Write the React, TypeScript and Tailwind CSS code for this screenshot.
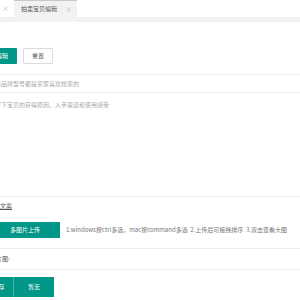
export default function App() {
  return (
    <div className="w-[300px] h-[300px] overflow-hidden bg-white text-[6px] leading-none font-['Noto_Sans_CJK_SC','Noto_Sans',sans-serif] text-[#666]">
      {/* tabs */}
      <div className="flex h-[17px] items-stretch">
        <div className="w-[14px] flex items-center justify-end pr-[5px] text-[#bbb] text-[7px]">×</div>
        <div className="w-[63px] bg-[#f2f2f2] border-t border-[#c8c8c8] flex items-center pl-[7px] text-[#555]">
          拍卖宝贝编辑
          <span className="ml-auto mr-[5px] text-[#bbb] text-[7px]">×</span>
        </div>
      </div>
      <div className="h-[5px] bg-[#f2f2f2]" />

      {/* buttons */}
      <div className="pt-[26px] flex gap-[6px] h-[42px]">
        <div className="-ml-[13px] w-[30px] h-[16px] bg-[#009688] text-white flex items-center justify-center rounded-[1px]">编辑</div>
        <div className="w-[30px] h-[16px] border border-[#dcdcdc] text-[#555] flex items-center justify-center rounded-[1px]">重置</div>
      </div>

      <div className="mt-[10px] border-t border-[#eee]" />
      <div className="h-[18px] flex items-center -ml-[11px] text-[#aaa] border-b border-[#eee]">时尚品牌型号都是买家喜欢搜索的</div>

      <div className="h-[104px] border-b border-[#eee] pt-[9px] -ml-[5px] text-[#aaa]">写下宝贝的获得原因、入手渠道和使用感受</div>

      <div className="h-[17px] flex items-center">
        <span className="-ml-[6px] text-[#555] underline">方文案</span>
      </div>

      <div className="mt-[8px] h-[16px] flex items-center">
        <div className="-ml-[10px] w-[70px] h-[16px] bg-[#009688] text-white flex items-center justify-center">多图片上传</div>
        <div className="ml-[6px] text-[#777] whitespace-nowrap">1.windows按ctrl多选，mac按command多选&nbsp;&nbsp;2.上传后可拖拽排序&nbsp;&nbsp;3.双击查看大图</div>
      </div>

      <div className="mt-[10px] border-t border-[#eee]" />
      <div className="h-[20px] flex items-center">
        <span className="-ml-[4px] text-[#555]">片图:</span>
      </div>
      <div className="border-t border-[#eee]" />

      <div className="mt-[7px] flex h-[20px]">
        <div className="-ml-[16px] w-[30px] bg-[#009688] text-white flex items-center justify-center border-r border-[#4db6ac]">保存</div>
        <div className="w-[40px] bg-[#009688] text-white flex items-center justify-center">暂无</div>
      </div>
    </div>
  );
}
